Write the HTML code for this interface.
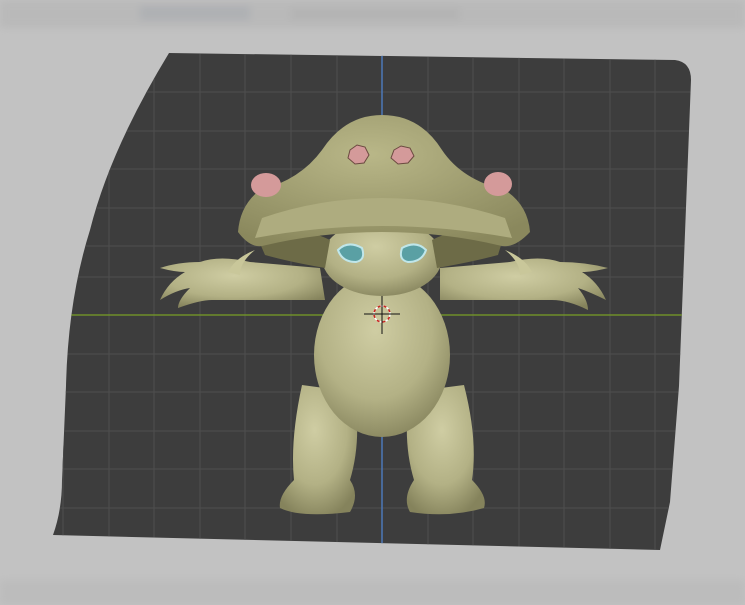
<!DOCTYPE html>
<html><head><meta charset="utf-8"><style>
html,body{margin:0;padding:0;width:745px;height:605px;overflow:hidden;background:#c2c2c2;font-family:"Liberation Sans",sans-serif}
</style></head><body>
<svg width="745" height="605" viewBox="0 0 745 605" xmlns="http://www.w3.org/2000/svg">
<defs>
<filter id="bl"><feGaussianBlur stdDeviation="4"/></filter>
<radialGradient id="sk" cx="0.45" cy="0.35" r="0.7"><stop offset="0" stop-color="#cfcda3"/><stop offset="0.6" stop-color="#b3b185"/><stop offset="1" stop-color="#85835c"/></radialGradient>
<radialGradient id="cap" cx="0.45" cy="0.3" r="0.75"><stop offset="0" stop-color="#b9b788"/><stop offset="1" stop-color="#8a885d"/></radialGradient>
<clipPath id="pc"><path d="M169,53 L675,60 Q691,62 691,80 L679,386 L670,502 L660,550 L53,535 Q62,510 62,480 L66,386 Q68,300 90,230 Q110,150 169,53 Z"/></clipPath>
</defs>
<rect width="745" height="605" fill="#c2c2c2"/>
<g filter="url(#bl)">
<rect x="0" y="0" width="745" height="28" fill="#b9b9b9"/>
<rect x="140" y="6" width="110" height="14" fill="#aeb0b4"/>
<rect x="290" y="8" width="170" height="12" fill="#b4b4b4"/>
<rect x="0" y="580" width="745" height="25" fill="#bcbcbc"/>
</g>
<path d="M169,53 L675,60 Q691,62 691,80 L679,386 L670,502 L660,550 L53,535 Q62,510 62,480 L66,386 Q68,300 90,230 Q110,150 169,53 Z" fill="#3d3d3d"/>
<g clip-path="url(#pc)" stroke="#4f4f4f" stroke-width="1">
<line x1="18" y1="40" x2="18" y2="560"/><line x1="63" y1="40" x2="63" y2="560"/><line x1="109" y1="40" x2="109" y2="560"/><line x1="154" y1="40" x2="154" y2="560"/><line x1="200" y1="40" x2="200" y2="560"/><line x1="245" y1="40" x2="245" y2="560"/><line x1="291" y1="40" x2="291" y2="560"/><line x1="337" y1="40" x2="337" y2="560"/><line x1="428" y1="40" x2="428" y2="560"/><line x1="473" y1="40" x2="473" y2="560"/><line x1="519" y1="40" x2="519" y2="560"/><line x1="564" y1="40" x2="564" y2="560"/><line x1="610" y1="40" x2="610" y2="560"/><line x1="655" y1="40" x2="655" y2="560"/>
<line x1="40" y1="92" x2="700" y2="92"/><line x1="40" y1="131" x2="700" y2="131"/><line x1="40" y1="169" x2="700" y2="169"/><line x1="40" y1="208" x2="700" y2="208"/><line x1="40" y1="246" x2="700" y2="246"/><line x1="40" y1="277" x2="700" y2="277"/><line x1="40" y1="354" x2="700" y2="354"/><line x1="40" y1="392" x2="700" y2="392"/><line x1="40" y1="431" x2="700" y2="431"/><line x1="40" y1="469" x2="700" y2="469"/><line x1="40" y1="508" x2="700" y2="508"/>
<line x1="382" y1="40" x2="382" y2="560" stroke="#4c78b8" stroke-width="1.5"/>
<line x1="40" y1="315" x2="700" y2="315" stroke="#6f8f2a" stroke-width="1.5"/>
</g>
<g>
<path d="M302,385 Q290,440 294,480 Q278,496 280,508 Q300,518 350,512 Q360,495 350,480 Q362,440 354,392 Z" fill="url(#sk)"/>
<path d="M410,392 Q402,440 414,480 Q402,498 410,512 Q450,518 484,508 Q488,496 472,480 Q478,440 464,385 Z" fill="url(#sk)"/>
<path d="M320,268 L250,262 Q220,255 200,262 Q178,262 160,268 Q175,272 185,272 Q168,282 160,300 Q176,290 190,288 Q178,300 178,308 Q200,300 212,300 L250,300 L325,300 Z" fill="url(#sk)"/>
<path d="M440,268 L510,262 Q540,255 560,262 Q585,262 608,268 Q592,272 582,272 Q598,282 606,300 Q590,292 578,288 Q588,300 588,310 Q568,300 552,300 L512,300 L440,300 Z" fill="url(#sk)"/>
<path d="M228,272 Q235,258 255,250 Q240,262 240,275 Z" fill="#c9c79a"/>
<path d="M532,272 Q525,258 505,250 Q520,262 520,275 Z" fill="#c9c79a"/>
<ellipse cx="382" cy="355" rx="68" ry="82" fill="url(#sk)"/>
<ellipse cx="382" cy="258" rx="60" ry="38" fill="url(#sk)"/>
<path d="M255,232 Q300,225 330,240 L325,268 Q290,262 265,255 Z" fill="#6d6b47"/>
<path d="M505,232 Q460,225 432,240 L437,268 Q472,262 498,255 Z" fill="#6d6b47"/>
<path d="M382,115 Q345,115 322,150 Q300,180 260,190 Q240,205 238,232 Q250,248 262,246 Q320,232 382,232 Q444,232 502,246 Q515,248 530,232 Q528,205 505,190 Q462,180 442,150 Q420,115 382,115 Z" fill="url(#cap)"/>
<path d="M262,218 Q320,198 382,198 Q444,198 505,218 L512,238 Q445,226 382,226 Q320,226 255,238 Z" fill="#aeac7f"/>
<polygon points="350,150 357,145 365,147 369,155 364,163 355,164 348,158" fill="#d49a9a" stroke="#6b4a40"/>
<polygon points="394,150 401,146 410,148 414,156 408,163 398,164 391,158" fill="#d49a9a" stroke="#6b4a40"/>
<ellipse cx="266" cy="185" rx="15" ry="12" fill="#d49a9a"/>
<ellipse cx="498" cy="184" rx="14" ry="12" fill="#d49a9a"/>
<path d="M338,250 Q348,240 362,248 Q366,260 356,262 Q342,262 338,250 Z" fill="#5aa0a4" stroke="#bfe6ea" stroke-width="2"/>
<path d="M426,250 Q416,240 402,248 Q398,260 408,262 Q422,262 426,250 Z" fill="#5aa0a4" stroke="#bfe6ea" stroke-width="2"/>
<circle cx="382" cy="314" r="8" fill="none" stroke="#fff" stroke-width="1.5" stroke-dasharray="3 3"/>
<circle cx="382" cy="314" r="8" fill="none" stroke="#c22" stroke-width="1.5" stroke-dasharray="3 3" stroke-dashoffset="3"/>
<line x1="364" y1="314" x2="400" y2="314" stroke="#111"/>
<line x1="382" y1="296" x2="382" y2="334" stroke="#111"/>
</g>
</svg>
</body></html>
